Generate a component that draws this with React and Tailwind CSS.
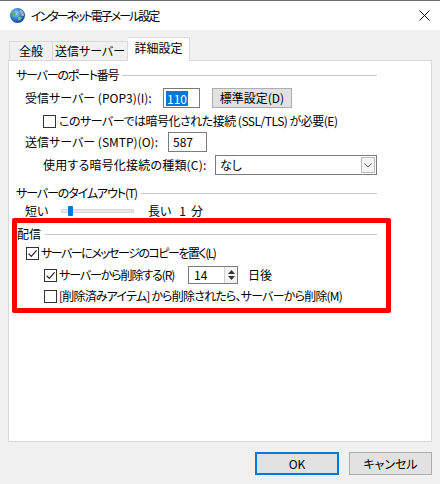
import React from "react";

const Check = ({ checked }) => (
  <span className="w-[13px] h-[13px] border border-[#333333] bg-white flex items-center justify-center shrink-0">
    {checked && (
      <svg width="11" height="11" viewBox="0 0 11 11">
        <path d="M1.6 5.6 L4.3 8.3 L9.6 2.4" fill="none" stroke="#222" strokeWidth="1.2" />
      </svg>
    )}
  </span>
);

const GroupHeader = ({ label, className = "" }) => (
  <div className="flex items-center h-[16px]">
    <span className={"leading-none " + className}>{label}</span>
    <div className="flex-1 h-px bg-[#c6c6c6] ml-[4px]" />
  </div>
);

const App = () => {
  return (
    <div className="w-[440px] h-[484px] bg-[#f0f0f0] border-t border-[#6e6e6e] text-[12px] text-black whitespace-nowrap font-['Noto_Sans_CJK_JP','Noto_Sans',sans-serif] [font-feature-settings:'palt'] overflow-hidden">
      {/* title bar */}
      <div className="h-[29px] bg-white flex items-center pl-[9px] pr-[10px]">
        <svg width="17" height="17" viewBox="0 0 17 17" className="shrink-0">
          <defs>
            <radialGradient id="g" cx="40%" cy="35%" r="65%">
              <stop offset="0" stopColor="#9fd3f5" />
              <stop offset="0.6" stopColor="#2c7cc8" />
              <stop offset="1" stopColor="#164c8a" />
            </radialGradient>
          </defs>
          <circle cx="8.5" cy="8.5" r="7.5" fill="url(#g)" />
          <path d="M3.5 6 Q6 4 7 6.5 Q6 9 4 10 Q2.5 8 3.5 6Z" fill="#5cb85c" />
          <path d="M9 10 Q12 9 13 11 Q11 14 9 13Z" fill="#6cc46c" />
          <path d="M11.5 2.5 A7 7 0 0 1 15 9 L12.5 9 A4.5 4.5 0 0 0 10.5 4.5Z" fill="#bfbfbf" opacity="0.8" />
        </svg>
        <span className="ml-[5px] text-[12px] tracking-[-2px]">インターネット電子メール設定</span>
        <div className="flex-1" />
        <svg width="11" height="11" viewBox="0 0 11 11">
          <path d="M0.5 0.5 L10.5 10.5 M10.5 0.5 L0.5 10.5" stroke="#111" strokeWidth="1" />
        </svg>
      </div>

      {/* tabs */}
      <div className="h-[30px] flex items-end pl-[9px]">
        <div className="h-[19px] w-[44px] border border-b-0 border-[#d9d9d9] flex items-center justify-center">全般</div>
        <div className="h-[19px] w-[75px] border border-b-0 border-l-0 border-[#d9d9d9] flex items-center justify-center">送信サーバー</div>
        <div className="relative z-10 -mb-px h-[24px] w-[62px] bg-white border border-b-0 border-l-0 border-[#d9d9d9] flex items-center justify-center pb-[3px]">詳細設定</div>
      </div>

      {/* panel */}
      <div className="mx-[8px] h-[382px] border border-[#d9d9d9] bg-white flex flex-col">
        <div className="mt-[6px] ml-[7px] w-[361px]">
          <GroupHeader label="サーバーのポート番号" className="tracking-[-1.2px]" />
        </div>

        <div className="mt-[5px] ml-[16px] h-[20px] flex items-center">
          <span className="w-[138px]">受信サーバー (POP3)(I):</span>
          <div className="w-[37px] h-[20px] border border-[#7a7a7a] flex items-center pl-[2px]">
            <span className="bg-[#0078d7] text-white px-[1px] leading-[15px]">110</span>
          </div>
          <button className="ml-[12px] w-[80px] h-[20px] bg-[#e1e1e1] border border-[#adadad] flex items-center justify-center">
            標準設定(D)
          </button>
        </div>

        <div className="mt-[5px] ml-[34px] h-[16px] flex items-center">
          <Check />
          <span className="ml-[3px] tracking-[-0.5px]">このサーバーでは暗号化された接続 (SSL/TLS) が必要(E)</span>
        </div>

        <div className="mt-[3px] ml-[16px] h-[20px] flex items-center">
          <span className="w-[143px]">送信サーバー (SMTP)(O):</span>
          <div className="w-[39px] h-[20px] border border-[#7a7a7a] flex items-center pl-[4px]">587</div>
        </div>

        <div className="mt-[3px] ml-[34px] h-[20px] flex items-center">
          <span className="w-[172px] tracking-[0.2px]">使用する暗号化接続の種類(C):</span>
          <div className="w-[162px] h-[20px] border border-[#7a7a7a] flex items-center pl-[4px] pr-[1px]">
            <span className="flex-1">なし</span>
            <div className="w-[14px] h-[16px] border border-[#bcbcbc] bg-[#f4f4f4] flex items-center justify-center">
              <svg width="8" height="5" viewBox="0 0 8 5">
                <path d="M0.5 0.5 L4 4 L7.5 0.5" fill="none" stroke="#555" strokeWidth="1" />
              </svg>
            </div>
          </div>
        </div>

        <div className="mt-[10px] ml-[7px] w-[361px]">
          <GroupHeader label="サーバーのタイムアウト(T)" className="tracking-[-1.1px]" />
        </div>

        <div className="mt-[3px] ml-[16px] h-[13px] flex items-center">
          <span className="w-[36px]">短い</span>
          <div className="relative w-[73px] h-[4px] bg-[#e7eaea] border border-[#d6d6d6]">
            <div className="absolute left-[6px] -top-[4px] w-[5px] h-[10px] bg-[#0078d7] rounded-[1px]" />
          </div>
          <span className="ml-[14px]">長い</span>
          <span className="ml-[8px]">1</span>
          <span className="ml-[5px]">分</span>
        </div>

        {/* red highlight box */}
        <div className="mt-px ml-[3px] w-[379px] h-[95px] border-[5px] border-[#ff0000] rounded-[2px] flex flex-col">
          <div className="mt-[3px] pr-[9px]">
            <GroupHeader label="配信" />
          </div>
          <div className="mt-[3px] ml-[9px] h-[16px] flex items-center">
            <Check checked />
            <span className="ml-[2px] tracking-[-1.5px]">サーバーにメッセージのコピーを置く(L)</span>
          </div>
          <div className="mt-[5px] ml-[27px] h-[18px] flex items-center">
            <div className="w-[144px] flex items-center">
              <Check checked />
              <span className="ml-[2px] tracking-[-1.1px]">サーバーから削除する(R)</span>
            </div>
            <div className="w-[50px] h-[18px] border border-[#7a7a7a] flex items-center">
              <span className="flex-1 pl-[5px]">14</span>
              <div className="w-[13px] h-[16px] border-l border-[#d0d0d0] bg-[#f4f4f4] flex flex-col items-center justify-center gap-[2px]">
                <svg width="7" height="4" viewBox="0 0 7 4"><path d="M0 4 L3.5 0 L7 4Z" fill="#333" /></svg>
                <svg width="7" height="4" viewBox="0 0 7 4"><path d="M0 0 L3.5 4 L7 0Z" fill="#333" /></svg>
              </div>
            </div>
            <span className="ml-[10px]">日後</span>
          </div>
          <div className="mt-[4px] ml-[27px] h-[16px] flex items-center">
            <Check />
            <span className="ml-[2px] tracking-[-0.8px]">[削除済みアイテム] から削除されたら、サーバーから削除(M)</span>
          </div>
        </div>
      </div>

      {/* buttons */}
      <div className="mt-[10px] h-[23px] flex justify-end gap-[10px] pr-[8px]">
        <button className="w-[84px] h-[23px] bg-[#e1e1e1] border-2 border-[#0078d7] flex items-center justify-center">OK</button>
        <button className="w-[83px] h-[23px] bg-[#e1e1e1] border border-[#adadad] flex items-center justify-center">キャンセル</button>
      </div>
    </div>
  );
};

export default App;
